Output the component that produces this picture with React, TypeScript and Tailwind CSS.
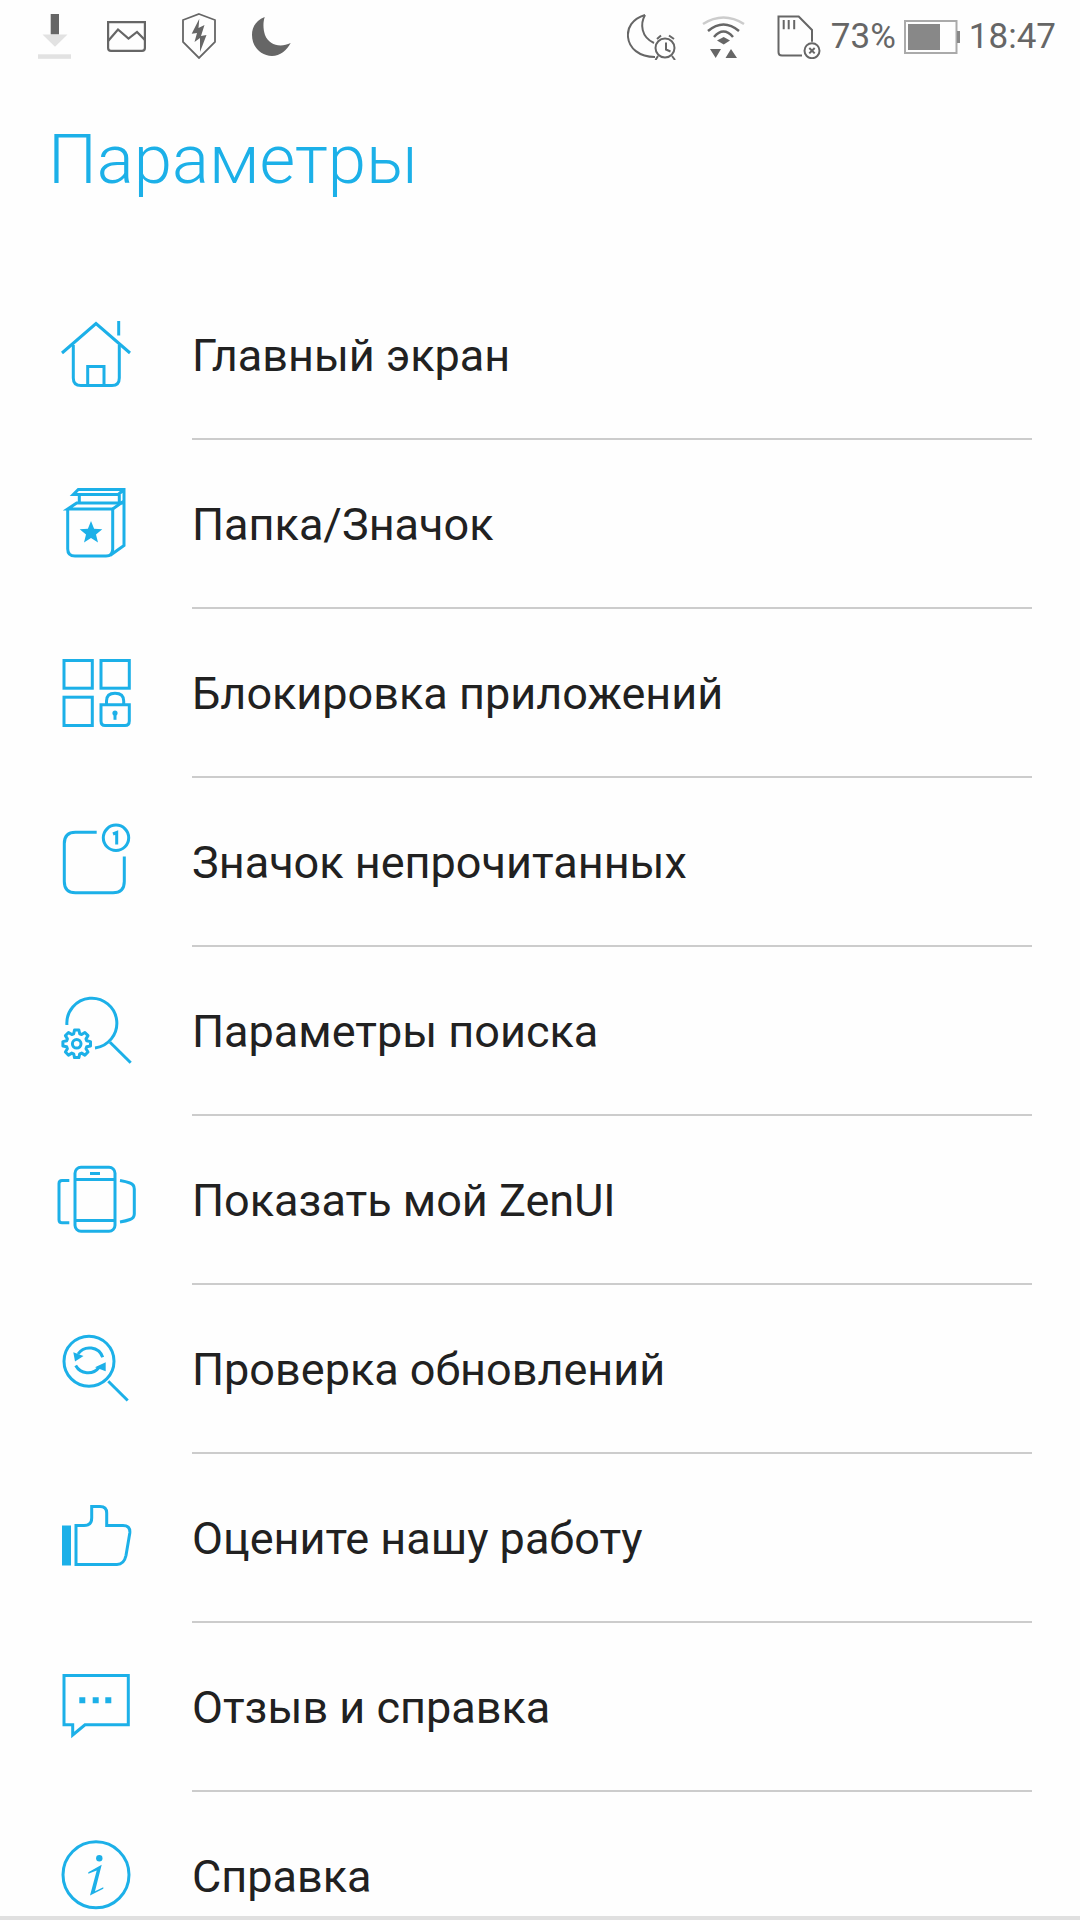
const blue = "#1cb0e8";
const gray = "#666666";

function Icon({ children }: { children: React.ReactNode }) {
  return (
    <svg viewBox="0 0 90 90" className="h-[90px] w-[90px]" fill="none" stroke={blue} strokeWidth="3">
      {children}
    </svg>
  );
}

// 8 tooth gear outline for the search settings icon
function gearPath(cx: number, cy: number, outer: number, inner: number) {
  const pts: string[] = [];
  for (let i = 0; i < 8; i++) {
    const a = (i * Math.PI) / 4;
    const step = Math.PI / 8;
    [
      [inner, a - step * 0.75],
      [outer, a - step * 0.4],
      [outer, a + step * 0.4],
      [inner, a + step * 0.75],
    ].forEach(([r, t]) => {
      pts.push(`${(cx + r * Math.cos(t)).toFixed(1)} ${(cy + r * Math.sin(t)).toFixed(1)}`);
    });
  }
  return "M" + pts.join(" L") + " Z";
}

const items: { label: string; icon: React.ReactNode }[] = [
  {
    label: "Главный экран",
    icon: (
      <Icon>
        <path d="M12 44 L46 14.500 L80 44" />
        <path d="M68.700 12 V26.500" />
        <path d="M23.300 36 V69 Q23.300 76.500 31 76.500 H62 Q69.300 76.500 69.300 69 V36" />
        <path d="M37.700 76.500 V57.500 H54 V76.500" />
      </Icon>
    ),
  },
  {
    label: "Папка/Значок",
    icon: (
      <Icon>
        <path d="M17.700 32 V71 Q17.700 78 25 78 H56 Q62.700 78 62.700 71 V31 H17.700 L26.700 25 H74" />
        <path d="M62.700 31 L74 23 M60 77.500 L74 67.500 V11.500 H28.300 L23.300 16.500 H68.300 L74 11.500" />
        <path d="M29.300 16.500 V25 M69.300 16.500 V25" />
        <path d="M41 43 L44.100 50.700 L52.300 51.200 L46 56.500 L48 64.500 L41 60 L34 64.500 L36 56.500 L29.700 51.200 L37.900 50.700 Z" fill={blue} stroke="none" />
      </Icon>
    ),
  },
  {
    label: "Блокировка приложений",
    icon: (
      <Icon>
        <rect x="14" y="13.500" width="28.300" height="27.700" />
        <rect x="51" y="13.500" width="28.300" height="27.700" />
        <rect x="14" y="50.200" width="28.300" height="28.300" />
        <path d="M51 57.800 H79.300 V74 Q79.300 78.500 75 78.500 H55 Q51 78.500 51 74 Z" />
        <path d="M56.500 57.800 V54 Q56.500 46.200 65 46.200 Q73.700 46.200 73.700 54 V57.800" />
        <circle cx="65" cy="66" r="2.600" fill={blue} stroke="none" />
        <path d="M65 66 V72.800" />
      </Icon>
    ),
  },
  {
    label: "Значок непрочитанных",
    icon: (
      <Icon>
        <path d="M46.700 16.200 H25.500 Q14.300 16.200 14.300 27.500 V65.500 Q14.300 76.800 25.500 76.800 H63 Q74.300 76.800 74.300 65.500 V40.500" />
        <circle cx="66" cy="21.800" r="12.700" />
        <path d="M63 18 L66.700 16.500 V28.500" />
      </Icon>
    ),
  },
  {
    label: "Параметры поиска",
    icon: (
      <Icon>
        <path d="M16.900 40 A25 25 0 1 1 45 63" />
        <path d="M60 57.200 L80.700 77.800" />
        <path d={gearPath(26.700, 58.800, 14, 10.500)} strokeLinejoin="round" />
        <circle cx="26.700" cy="58.800" r="4.300" />
      </Icon>
    ),
  },
  {
    label: "Показать мой ZenUI",
    icon: (
      <Icon>
        <rect x="25" y="13.200" width="40" height="64" rx="6" />
        <path d="M25 25.500 H65 M25 66.500 H65" />
        <path d="M40 19.500 H50" />
        <path d="M19.300 26.500 H12 Q9 26.500 9 29.500 V65.800 Q9 68.800 12 68.800 H19.300" />
        <path d="M70 26.500 Q76 27.500 80 29 Q84.300 30.500 84.300 35 V60 Q84.300 64 80 65.500 Q76 67 70 68" />
      </Icon>
    ),
  },
  {
    label: "Проверка обновлений",
    icon: (
      <Icon>
        <circle cx="39" cy="38.200" r="25" />
        <path d="M58.300 58.200 L77.700 77.500" />
        <path d="M52.700 34.200 A14 14 0 0 0 28 31" />
        <path d="M25.700 42.500 A14 14 0 0 0 49 44.500" />
        <path d="M23.300 29.200 L33.500 33 L25 38.500 Z" fill={blue} stroke="none" />
        <path d="M55.700 39.200 L55.700 48.200 L45 44.200 Z" fill={blue} stroke="none" />
      </Icon>
    ),
  },
  {
    label: "Оцените нашу работу",
    icon: (
      <Icon>
        <rect x="12" y="33.500" width="9" height="40" fill={blue} stroke="none" />
        <path d="M26 72.500 V33.500 H34 Q41.700 33.500 41.700 26 V14.500 H50 Q56.700 14.500 56.700 21 V33.500 H73 Q80.500 33.500 79.800 41 L76 63.500 Q74 72.500 67 72.500 Z" />
      </Icon>
    ),
  },
  {
    label: "Отзыв и справка",
    icon: (
      <Icon>
        <path d="M14 14.500 H78.300 V63.800 H35 L22.700 74 V63.800 H14 Z" />
        <path d="M29.300 36.200 h6 v6 h-6z M42.700 36.200 h6 v6 h-6z M55.300 36.200 h6 v6 h-6z" fill={blue} stroke="none" />
      </Icon>
    ),
  },
  {
    label: "Справка",
    icon: (
      <Icon>
        <circle cx="46" cy="44.800" r="33" />
        <circle cx="49.300" cy="28.200" r="3.200" fill={blue} stroke="none" />
        <path d="M38.300 42.200 L51.700 34.800 L45 61.200 L53.300 57.200 L53.300 58.800 L40 65.500 L46.700 40.500 L38.300 43.800 Z" fill={blue} stroke="none" />
      </Icon>
    ),
  },
];

function StatusBar() {
  return (
    <div className="flex h-[74px] items-center justify-between pl-[38px] pr-[24px] text-[#666666]">
      <div className="flex items-center gap-[36px] pb-[2px]">
        <svg viewBox="0 0 33 45" className="h-[45px] w-[33px]">
          <rect x="12.700" y="0" width="8.300" height="20.500" fill={gray} />
          <path d="M4.500 20.500 H29.500 L17 32.700 Z" fill="#e2e2e2" />
          <rect x="0" y="40.300" width="33" height="4.500" fill="#e2e2e2" />
        </svg>
        <svg viewBox="0 0 39 31" className="h-[31px] w-[39px]" fill="none" stroke={gray} strokeWidth="2.200">
          <path d="M1.100 1.100 H37.900 V27 Q37.900 29.900 35 29.900 H4 Q1.100 29.900 1.100 27 Z" />
          <path d="M1.100 20 L11 8.500 L21.500 17.500 L30 11 L37.900 19" />
        </svg>
        <svg viewBox="0 0 34 46" className="h-[46px] w-[34px]" fill="none" stroke={gray} strokeWidth="1.800">
          <path d="M17 1 L33 7 V29 L17 45 L1 29 V7 Z" />
          <path d="M17.300 5.700 L9.700 20.700 L15 20 L12.500 29 L18 25 L18 39 L24.500 22 L19 23 L22.500 12 L16.500 15 Z" fill={gray} stroke="none" />
        </svg>
        <svg viewBox="0 0 39 39" className="h-[39px] w-[39px]">
          <path d="M12.700 0 C3 4 0 11 0 18 C0 30 9 39 20 39 C28 39 35 33 38.700 26 C28 31 17 28 13 18 C11 12 11 5 12.700 0 Z" fill={gray} />
        </svg>
      </div>
      <div className="flex items-center">
        <svg viewBox="0 0 50 46" className="h-[46px] w-[50px]" fill="none" stroke={gray} strokeWidth="2">
          <path d="M18 1 C5 5 0 14 1 23 C2 34 12 43 28 43" />
          <path d="M18 1 C13 10 14 23 27 29" />
          <circle cx="38" cy="34" r="9.500" />
          <path d="M39 28.500 V35.500 L43.500 37.500" />
          <path d="M30 25 L34 21.500 M42 21.500 L47 25 M31 42 L28.500 46 M45 42 L48 46" />
        </svg>
        <svg viewBox="0 0 43 43" className="ml-[25px] h-[43px] w-[43px]" fill="none" stroke={gray} strokeWidth="2.500">
          <path d="M1 8 Q21.500 -5 42 8" stroke="#cccccc" />
          <path d="M6 15 Q21.500 2 37 15" />
          <path d="M12 21 Q21.500 10 31 21" />
          <path d="M15 24.500 L21.700 21 L28 24.500 L21.700 28.500 Z" fill={gray} stroke="none" />
          <path d="M8 33 H19 L13.700 42 Z M23.500 42 H35 L29 33 Z" fill={gray} stroke="none" />
        </svg>
        <svg viewBox="0 0 44 44" className="ml-[32px] h-[44px] w-[44px]" fill="none" stroke={gray} strokeWidth="2">
          <path d="M25 40.500 H5 Q1.500 40.500 1.500 37 V1.500 H21.700 L35 15 V26.700" />
          <path d="M6.700 5 V14.300 M11.700 5 V14.300 M17.200 5 V14.300" />
          <circle cx="35" cy="35.700" r="7.500" />
          <path d="M32.300 33 L37.700 38.400 M37.700 33 L32.300 38.400" />
        </svg>
        <div className="ml-[10px] text-[35px] leading-[50px]">73%</div>
        <svg viewBox="0 0 56 34" className="ml-[8px] h-[34px] w-[56px]">
          <rect x="1" y="1" width="51.500" height="32" fill="none" stroke="#aaaaaa" strokeWidth="2" />
          <rect x="4" y="4" width="32" height="26" fill="#888888" />
          <rect x="53" y="11" width="3" height="12" fill="#888888" />
        </svg>
        <div className="ml-[9px] text-[35px] leading-[50px]">18:47</div>
      </div>
    </div>
  );
}

export default function App() {
  return (
    <div className="relative h-[1920px] w-[1080px] overflow-hidden bg-[#fefefe] font-['Roboto',sans-serif]">
      <StatusBar />
      <div className="pl-[48px] pt-[50px] text-[69px] font-light leading-[72px] text-[#1cb0e8]">Параметры</div>
      <div className="mt-[75px]">
        {items.map((item) => (
          <div key={item.label} className="flex h-[169px] items-center">
            <div className="w-[192px] shrink-0 pb-[4px] pl-[50px]">{item.icon}</div>
            <div className="mr-[48px] flex h-full flex-1 items-center border-b-2 border-[#cccccc] pt-[2px] text-[45px] text-[#212121]">
              {item.label}
            </div>
          </div>
        ))}
      </div>
      <div className="absolute bottom-0 left-0 h-[4px] w-full bg-[#e0e0e0]" />
    </div>
  );
}
